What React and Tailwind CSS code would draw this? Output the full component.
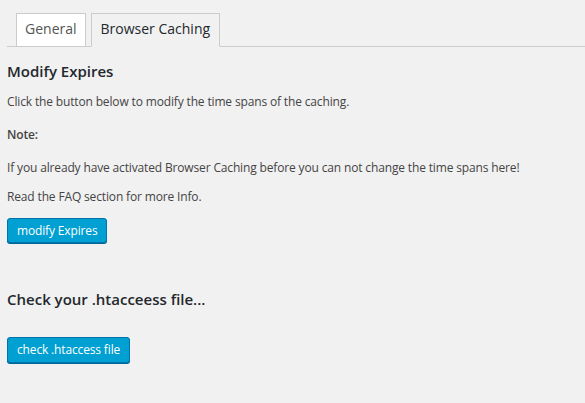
export default function App() {
  const font = { fontFamily: '"Open Sans", sans-serif' };
  return (
    <div className="min-h-[403px] w-[585px] bg-[#f1f1f1] pl-[7px] text-[12px] text-[#444]" style={font}>
      <div className="flex items-end border-b border-[#ccc] pt-[13px] pl-[9px]">
        <div className="-mb-px mr-[5px] border border-[#ccc] bg-white px-[8px] pt-[3px] pb-[5px] text-[14px] leading-[24px] text-[#555]">General</div>
        <div className="-mb-px border border-b-[#f1f1f1] border-[#ccc] bg-[#f1f1f1] px-[9px] pt-[3px] pb-[5px] text-[14px] leading-[24px] text-[#23282d]">Browser Caching</div>
      </div>
      <h2 className="mt-[12px] text-[15px] font-semibold leading-[24px] text-[#23282d]">Modify Expires</h2>
      <div className="tracking-[-0.15px]">
        <p className="mt-[9px] leading-[20px]">Click the button below to modify the time spans of the caching.</p>
        <p className="mt-[13px] font-semibold leading-[20px]">Note:</p>
        <p className="mt-[13px] leading-[20px]">If you already have activated Browser Caching before you can not change the time spans here!</p>
        <p className="mt-[9px] leading-[20px]">Read the FAQ section for more Info.</p>
        <div className="mt-[11px]">
          <button className="h-[25px] rounded-[3px] border border-[#0073aa] bg-[#00a0d2] px-[9px] text-[12px] leading-[23px] text-white shadow-[0_1px_0_#006799]">modify Expires</button>
        </div>
      </div>
      <h2 className="mt-[44px] text-[15px] font-semibold leading-[24px] text-[#23282d]">Check your .htacceess file...</h2>
      <div className="mt-[26px] tracking-[-0.15px]">
        <button className="h-[26px] rounded-[3px] border border-[#0073aa] bg-[#00a0d2] px-[9px] text-[12px] leading-[24px] text-white shadow-[0_1px_0_#006799]">check .htaccess file</button>
      </div>
    </div>
  );
}
